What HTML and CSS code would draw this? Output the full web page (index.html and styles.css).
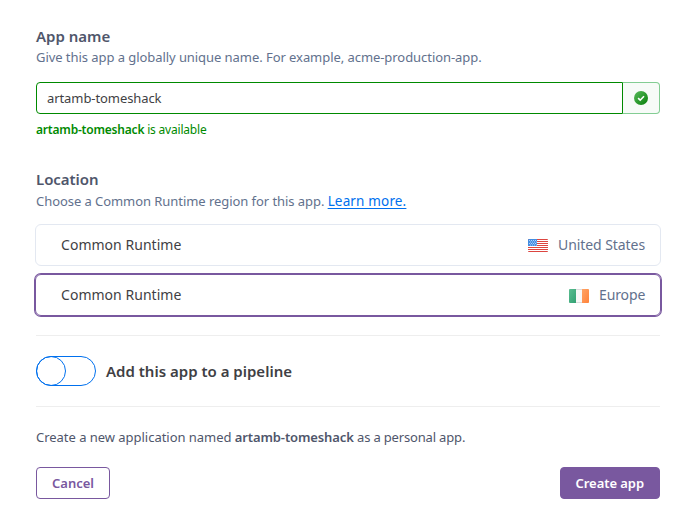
FILE: index.html
```html
<!DOCTYPE html>
<html lang="en">
<head>
<meta charset="utf-8">
<title>Create app</title>
<link rel="stylesheet" href="styles.css">
</head>
<body>
<form class="form">
  <section class="name">
    <h2 class="heading">App name</h2>
    <p class="hint">Give this app a globally unique name. For example, acme-production-app.</p>
    <div class="field">
      <div class="input"><span class="value">artamb-tomeshack</span></div>
      <div class="addon">
        <svg width="14" height="14" viewBox="0 0 14 14"><defs><linearGradient id="ok" x1="0" y1="0" x2="1" y2="1"><stop offset="0" stop-color="#58b95c"/><stop offset="1" stop-color="#078009"/></linearGradient></defs><circle cx="7" cy="7" r="7" fill="url(#ok)"/><path d="M4.1 7.2 6.2 9.2 10 5.2" fill="none" stroke="#fff" stroke-width="1.6"/></svg>
      </div>
    </div>
    <p class="status"><b>artamb-tomeshack</b> is available</p>
  </section>
  <section class="location">
    <h2 class="heading">Location</h2>
    <p class="hint">Choose a Common Runtime region for this app. <a class="link">Learn more.</a></p>
    <div class="regions">
      <div class="region">
        <span class="runtime">Common Runtime</span>
        <svg class="flag" width="20" height="14" viewBox="0 0 20 14"><defs><clipPath id="r"><rect width="20" height="13" rx="1"/></clipPath></defs><g clip-path="url(#r)"><rect width="20" height="13" fill="#fff"/><path d="M0 .5H20M0 2.5H20M0 4.5H20M0 6.5H20M0 8.5H20M0 10.5H20M0 12.5H20" stroke="#dc4540"/><rect width="9" height="7" fill="#438de1"/><path d="M1 1.5H9M2 3H9M1 4.5H9M2 6H9" stroke="#c5e0ff" stroke-width=".8" stroke-dasharray="1 1"/></g></svg>
        <span class="place us">United States</span>
      </div>
      <div class="region selected">
        <span class="runtime">Common Runtime</span>
        <svg class="flag" width="20" height="14" viewBox="0 0 20 14"><defs><linearGradient id="g" x2="1" y2="1"><stop stop-color="#5bbd91"/><stop offset="1" stop-color="#32a173"/></linearGradient><linearGradient id="o" x2="1" y2="1"><stop stop-color="#ffa466"/><stop offset="1" stop-color="#ff823a"/></linearGradient></defs><rect x=".5" y=".5" width="19" height="13" rx="1" fill="#f8f8f8" stroke="#ddd"/><path d="M1 0H7V14H1Q0 14 0 13V1Q0 0 1 0" fill="url(#g)"/><path d="M13 0H19Q20 0 20 1V13Q20 14 19 14H13Z" fill="url(#o)"/></svg>
        <span class="place eu">Europe</span>
      </div>
    </div>
  </section>
  <section class="pipeline">
    <span class="toggle"><span class="knob"></span></span>
    <span>Add this app to a pipeline</span>
  </section>
  <p class="summary">Create a new application named <b>artamb-tomeshack</b> <span class="owner">as a personal app.</span></p>
  <div class="actions">
    <button type="button" class="button">Cancel</button>
    <button type="button" class="button primary">Create app</button>
  </div>
</form>
</body>
</html>
```
FILE: styles.css
```css
* { box-sizing: border-box; }
body { margin: 0; background: #fff; color: #3f3f44; font: 13px/20px "Noto Sans", "Open Sans", sans-serif; }
h2, p { margin: 0; }
b { font-weight: 600; }
.form { padding: 26px 35px 0 36px; }
.heading { font-size: 15px; line-height: 20px; font-weight: 600; letter-spacing: -.05px; color: #4f566b; }
.name .heading { letter-spacing: 0; }
.hint { height: 20px; margin-top: 1px; color: #62718d; line-height: 20px; letter-spacing: -.06px; white-space: nowrap; }
.field { display: flex; height: 32px; margin-top: 15px; }
.input { flex: 1; padding: 0 10px; line-height: 30px; border: 1px solid #008a00; border-radius: 4px 0 0 4px; }
.value { letter-spacing: -.08px; }
.addon { display: flex; align-items: center; justify-content: center; width: 37px; border: 1px solid #83cd93; border-left: 0; border-radius: 0 4px 4px 0; background: #f7fbf8; }
.status { margin-top: 6px; font-size: 12px; line-height: 20px; letter-spacing: -.2px; color: #008a00; }
.location { margin-top: 29px; }
.location .hint { margin-top: 2px; }
.link { color: #0070ee; font-size: 13.5px; line-height: 1; letter-spacing: .16px; text-decoration: underline; text-underline-offset: 2px; }
.regions { display: grid; gap: 8px; margin: 13px -1px 0; }
.region { display: flex; align-items: center; height: 42px; padding: 0 15px 0 25px; border: 1px solid #e3e8f1; border-radius: 6px; font-size: 14px; line-height: 20px; }
.selected { border-color: #79589f; box-shadow: 0 0 0 1px #79589f; }
.runtime { flex: 1; letter-spacing: .03px; }
.flag { margin-top: 2px; }
.place { margin-left: 10px; color: #62718d; white-space: nowrap; }
.us { width: 87px; letter-spacing: -.07px; }
.eu { width: 46px; letter-spacing: -.12px; }
.pipeline { display: flex; align-items: center; gap: 10px; height: 72px; margin-top: 19px; border: solid #eee; border-width: 1px 0; font-size: 15px; font-weight: 600; }
.toggle { width: 60px; height: 30px; border: 1px solid #0070ee; border-radius: 15px; }
.knob { display: block; width: 30px; height: 30px; margin: -1px; border: 1px solid #0070ee; border-radius: 50%; }
.summary { margin-top: 20px; color: #4f566b; letter-spacing: -.03px; white-space: nowrap; }
.summary b { letter-spacing: -.12px; }
.owner { letter-spacing: -.17px; }
.actions { display: flex; justify-content: space-between; margin-top: 20px; }
.button { height: 32px; padding: 0 15px; border: 1px solid #79589f; border-radius: 4px; background: #fff; color: #79589f; font: 600 13px/30px "Noto Sans", "Open Sans", sans-serif; }
.primary { color: #fff; background: #79589f; border-color: #79589f; letter-spacing: -.06px; }
```
